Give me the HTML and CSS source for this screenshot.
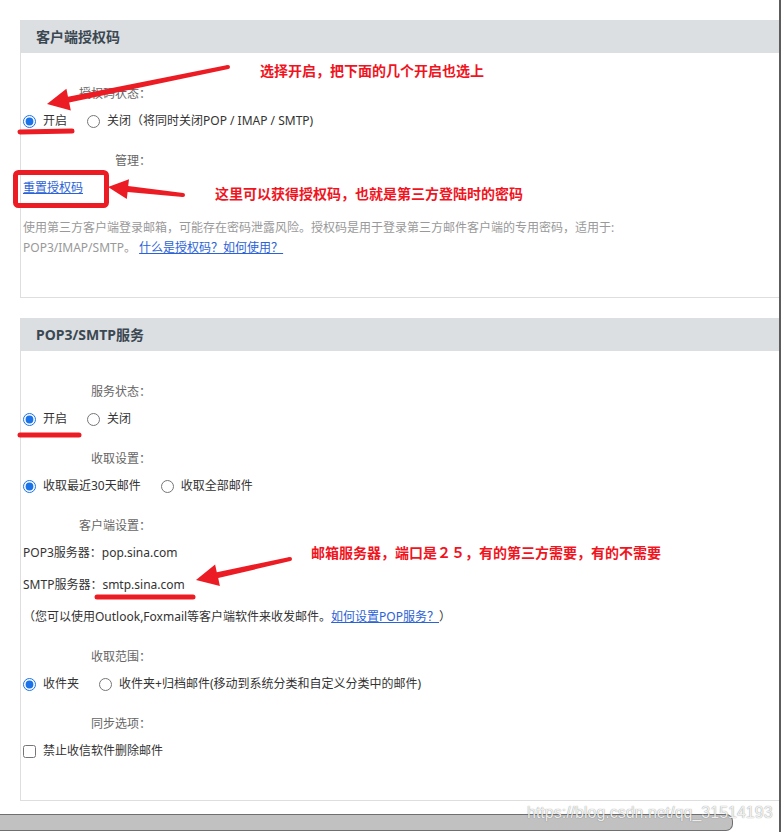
FILE: index.html
```html
<!DOCTYPE html>
<html>
<head>
    <title>客户端授权码 / POP3/SMTP服务</title>
    <link rel="stylesheet" href="styles.css">
</head>
<body>
    <div class="page">
        <section class="panel">
            <h3 class="panel-title">客户端授权码</h3>
            <div class="panel-body">
                <div class="field">
                    <div class="field-label">授权码状态：</div>
                    <div class="field-row">
                        <label class="option"><input type="radio" name="auth" checked>开启</label>
                        <label class="option"><input type="radio" name="auth">关闭（将同时关闭POP / IMAP / SMTP)</label>
                    </div>
                </div>
                <div class="field">
                    <div class="field-label">管理：</div>
                    <div class="field-row"><a href="#" class="link">重置授权码</a></div>
                </div>
                <p class="desc">使用第三方客户端登录邮箱，可能存在密码泄露风险。授权码是用于登录第三方邮件客户端的专用密码，适用于: POP3/IMAP/SMTP。 <a href="#" class="link">什么是授权码？如何使用？</a></p>
            </div>
        </section>

        <section class="panel">
            <h3 class="panel-title">POP3/SMTP服务</h3>
            <div class="panel-body">
                <div class="field">
                    <div class="field-label">服务状态：</div>
                    <div class="field-row">
                        <label class="option"><input type="radio" name="service" checked>开启</label>
                        <label class="option"><input type="radio" name="service">关闭</label>
                    </div>
                </div>
                <div class="field">
                    <div class="field-label">收取设置：</div>
                    <div class="field-row">
                        <label class="option"><input type="radio" name="fetch" checked>收取最近30天邮件</label>
                        <label class="option"><input type="radio" name="fetch">收取全部邮件</label>
                    </div>
                </div>
                <div class="field">
                    <div class="field-label">客户端设置：</div>
                    <div class="info">
                        <div class="info-line">POP3服务器：pop.sina.com</div>
                        <div class="info-line">SMTP服务器：smtp.sina.com</div>
                        <div class="info-line">（您可以使用Outlook,Foxmail等客户端软件来收发邮件。<a href="#" class="link">如何设置POP服务？</a>）</div>
                    </div>
                </div>
                <div class="field">
                    <div class="field-label">收取范围：</div>
                    <div class="field-row">
                        <label class="option"><input type="radio" name="scope" checked>收件夹</label>
                        <label class="option"><input type="radio" name="scope">收件夹+归档邮件(移动到系统分类和自定义分类中的邮件)</label>
                    </div>
                </div>
                <div class="field">
                    <div class="field-label">同步选项：</div>
                    <div class="field-row">
                        <label class="option"><input type="checkbox">禁止收信软件删除邮件</label>
                    </div>
                </div>
            </div>
        </section>

        <div class="hscroll"></div>

        <!-- red annotations drawn over the screenshot -->
        <svg class="marks" width="781" height="832" viewBox="0 0 781 832">
            <g fill="#ec1c24">
                <polygon points="47,104 66.4,88.8 68,96.7 227.6,65 228.4,69 69.2,102.5 70.8,110.4"/>
                <circle cx="228" cy="67" r="2"/>
                <polygon points="108,187 129,179.2 128.2,186.1 183.2,193 182.8,197 127.6,192.1 126.8,199.1"/>
                <circle cx="183" cy="195" r="2"/>
                <polygon points="196,580 215.1,564.5 216.8,572.3 289.6,557 290.4,561 218.2,578.1 219.9,585.9"/>
                <circle cx="290" cy="559" r="2"/>
            </g>
            <g stroke="#ec1c24" stroke-linecap="round" fill="none">
                <line x1="20" y1="132" x2="72" y2="131" stroke-width="5"/>
                <line x1="20" y1="435" x2="79" y2="435" stroke-width="5"/>
                <line x1="97" y1="597" x2="193" y2="597" stroke-width="5"/>
                <rect x="15.5" y="172.5" width="91" height="33" rx="3" stroke-width="5"/>
            </g>
        </svg>
        <div class="note note-1">选择开启，把下面的几个开启也选上</div>
        <div class="note note-2">这里可以获得授权码，也就是第三方登陆时的密码</div>
        <div class="note note-3">邮箱服务器，端口是２５，有的第三方需要，有的不需要</div>

        <div class="watermark">https://blog.csdn.net/qq_31514193</div>
    </div>
</body>
</html>
```

FILE: styles.css
```css
html, body {
    margin: 0;
    height: 100%;
    overflow: hidden;
    background: #fff;
}
body {
    font-family: "Noto Sans", "Noto Sans CJK SC", sans-serif;
    font-size: 12px;
    color: #333;
}
.page {
    position: relative;
    width: 781px;
    height: 832px;
    box-sizing: border-box;
    padding-top: 20px;
    border-right: 2px solid #5c5c5c;
    overflow: hidden;
}
.panel {
    margin-left: 20px;
    border-left: 1px solid #dedede;
    border-bottom: 1px solid #dedede;
}
.panel + .panel {
    margin-top: 20px;
}
.panel-title {
    margin: 0;
    height: 33px;
    line-height: 33px;
    padding-left: 15px;
    background: #dcdfe2;
    font-family: "Noto Sans", "Noto Sans CJK SC", sans-serif;
    font-size: 14px;
    font-weight: 700;
    color: #3b4852;
}
.panel-body {
    padding: 31px 0 39px 2px;
}
.field + .field {
    margin-top: 20px;
}
.field-label {
    width: 128px;
    text-align: right;
    line-height: 20px;
    color: #666;
}
.field-row {
    margin-top: 7px;
    display: flex;
    align-items: center;
    gap: 20px;
    line-height: 20px;
}
.option {
    display: inline-flex;
    align-items: center;
    gap: 7px;
}
.option input {
    margin: 0;
    width: 13px;
    height: 13px;
    accent-color: #1a73e8;
}
.link {
    color: #2b62d6;
    text-decoration: underline;
}
.desc {
    margin: 20px 0 0;
    max-width: 600px;
    line-height: 20px;
    color: #999;
}
.info {
    margin-top: 7px;
}
.info-line {
    line-height: 20px;
}
.info-line + .info-line {
    margin-top: 12px;
}
.hscroll {
    margin-top: 13px;
    width: 733px;
    height: 17px;
    box-sizing: border-box;
    background: #c1c1c1;
    border: 1px solid #6f6f6f;
    border-left: none;
    border-radius: 0 7px 7px 0;
}
.marks {
    position: absolute;
    left: 0;
    top: 0;
    pointer-events: none;
}
.note {
    position: absolute;
    font-family: "Noto Sans CJK SC", sans-serif;
    font-size: 14px;
    font-weight: 700;
    line-height: 20px;
    color: #f0141e;
    white-space: nowrap;
}
.note-1 {
    left: 260px;
    top: 60px;
}
.note-2 {
    left: 215px;
    top: 183px;
}
.note-3 {
    left: 311px;
    top: 542px;
}
.watermark {
    position: absolute;
    left: 527px;
    top: 804px;
    font-family: "Liberation Sans", Arial, sans-serif;
    font-size: 16px;
    line-height: 18px;
    color: rgba(255, 255, 255, 0.9);
    text-shadow: 0 0 1px rgba(0, 0, 0, 0.55);
    white-space: nowrap;
}
```
